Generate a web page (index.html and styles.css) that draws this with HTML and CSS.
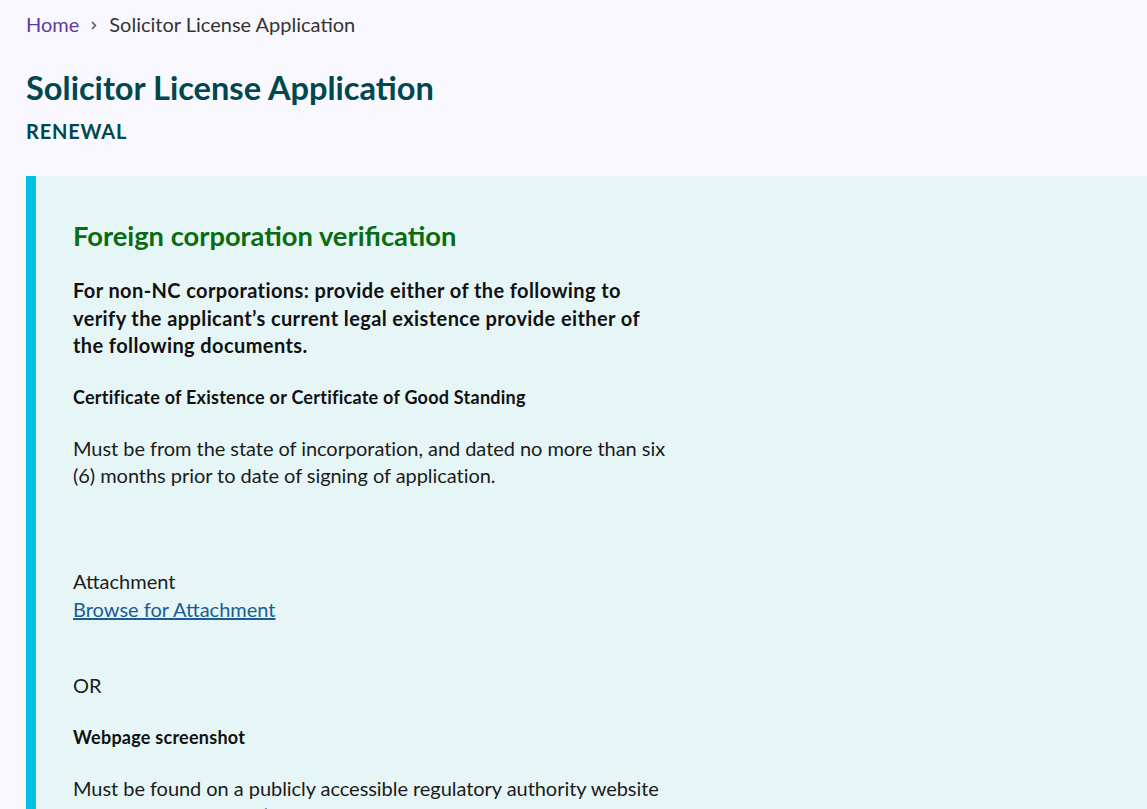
FILE: index.html
```html
<!DOCTYPE html>
<html lang="en">
<head>
<meta charset="utf-8">
<title>Solicitor License Application</title>
<link rel="stylesheet" href="styles.css">
</head>
<body>
<div class="page">
  <nav class="breadcrumb">
    <a class="crumb-link" href="#">Home</a>
    <svg class="crumb-sep" width="6" height="9" viewBox="0 0 6 9" aria-hidden="true"><path d="M1 1 L4.5 4.5 L1 8" fill="none" stroke="#5a5a5a" stroke-width="1.6"/></svg>
    <span class="crumb-current">Solicitor License Application</span>
  </nav>
  <header class="page-header">
    <h1 class="page-title">Solicitor License Application</h1>
    <div class="page-subtitle">RENEWAL</div>
  </header>
  <section class="panel">
    <div class="panel-body">
      <h2 class="panel-title">Foreign corporation verification</h2>
      <p class="lead">For non-NC corporations: provide either of the following to verify the applicant’s current legal existence provide either of the following documents.</p>
      <h3 class="item-title">Certificate of Existence or Certificate of Good Standing</h3>
      <p class="text">Must be from the state of incorporation, and dated no more than six (6) months prior to date of signing of application.</p>
      <div class="attachment">
        <div class="attachment-label">Attachment</div>
        <a class="link" href="#">Browse for Attachment</a>
      </div>
      <p class="text or">OR</p>
      <h3 class="item-title item-title-after-or">Webpage screenshot</h3>
      <p class="text text-last">Must be found on a publicly accessible regulatory authority website showing the applicant’s current legal existence.</p>
    </div>
  </section>
</div>
</body>
</html>
```
FILE: styles.css
```css
html, body {
  margin: 0;
  padding: 0;
}
body {
  background: #f8f8fe;
  font-family: Lato, "Liberation Sans", sans-serif;
  color: #1b1b1b;
  overflow: hidden;
}
.page {
  padding: 9px 0 0 26px;
}
.breadcrumb {
  display: flex;
  align-items: center;
  font-size: 20px;
  line-height: 30px;
}
.crumb-link {
  color: #5e3a9e;
  text-decoration: none;
}
.crumb-sep {
  display: block;
  margin: 2px 12px 0 12px;
}
.crumb-current {
  color: #333;
}
.page-header {
  padding-top: 30px;
}
.page-title {
  margin: 0;
  font-size: 32.6px;
  line-height: 38px;
  font-weight: 700;
  color: #00474f;
}
.page-subtitle {
  margin-top: 9px;
  font-size: 20px;
  line-height: 30px;
  font-weight: 700;
  letter-spacing: 0.8px;
  color: #00474f;
}
.panel {
  margin-top: 30px;
  background: #e6f6f7;
  border-left: 10px solid #00bfe0;
  padding: 44px 0 40px 37px;
}
.panel-body {
  width: 596px;
}
.panel-title {
  margin: 0;
  font-size: 27.3px;
  line-height: 32px;
  font-weight: 700;
  color: #0a6b10;
}
.lead {
  margin: 25px 0 0;
  font-size: 20px;
  line-height: 27.5px;
  font-weight: 700;
  letter-spacing: 0.4px;
  color: #111;
}
.item-title {
  margin: 25px 0 0;
  font-size: 18px;
  line-height: 24px;
  font-weight: 700;
  letter-spacing: 0.25px;
  color: #111;
}
.item-title-after-or {
  margin-top: 26px;
}
.text {
  margin: 26px 0 0;
  font-size: 20px;
  line-height: 27px;
  letter-spacing: -0.05px;
}
.text-last {
  margin-top: 26px;
}
.attachment {
  margin-top: 78px;
  font-size: 20px;
  line-height: 28px;
}
.attachment-label {
  line-height: 28px;
}
.link {
  color: #1a5b96;
  text-decoration: underline;
}
.text.or {
  margin-top: 49px;
}
```
